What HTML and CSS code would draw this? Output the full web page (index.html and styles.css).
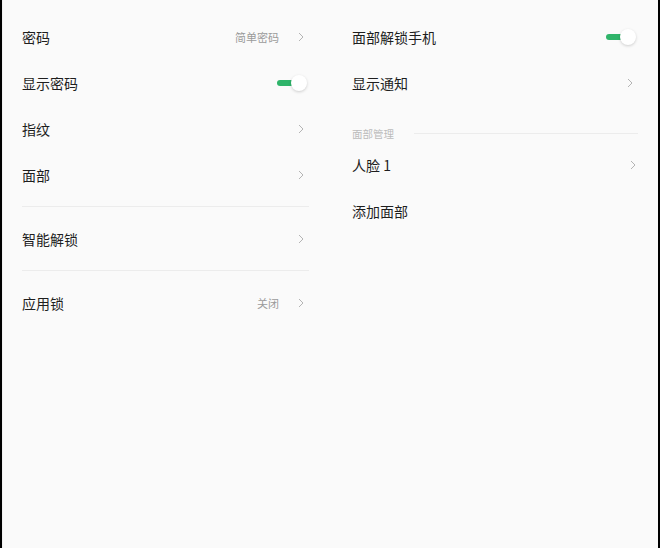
FILE: index.html
```html
<!DOCTYPE html>
<html lang="zh-CN">
<head>
    <meta charset="UTF-8">
    <meta name="viewport" content="width=device-width, initial-scale=1.0">
    <title>面部与密码</title>
    <link rel="stylesheet" href="styles.css">
</head>
<body>
    <div class="screen">
        <div class="pane">
            <div class="row">
                <span class="label">密码</span>
                <span class="value">简单密码</span>
                <svg class="chevron" viewBox="0 0 6 10"><polyline points="1,1 5,5 1,9"/></svg>
            </div>
            <div class="row">
                <span class="label">显示密码</span>
                <span class="switch on"><span class="knob"></span></span>
            </div>
            <div class="row">
                <span class="label">指纹</span>
                <svg class="chevron" viewBox="0 0 6 10"><polyline points="1,1 5,5 1,9"/></svg>
            </div>
            <div class="row">
                <span class="label">面部</span>
                <svg class="chevron" viewBox="0 0 6 10"><polyline points="1,1 5,5 1,9"/></svg>
            </div>
            <div class="divider"></div>
            <div class="row">
                <span class="label">智能解锁</span>
                <svg class="chevron" viewBox="0 0 6 10"><polyline points="1,1 5,5 1,9"/></svg>
            </div>
            <div class="divider"></div>
            <div class="row">
                <span class="label">应用锁</span>
                <span class="value">关闭</span>
                <svg class="chevron" viewBox="0 0 6 10"><polyline points="1,1 5,5 1,9"/></svg>
            </div>
        </div>

        <div class="pane pane--right">
            <div class="row">
                <span class="label">面部解锁手机</span>
                <span class="switch on"><span class="knob"></span></span>
            </div>
            <div class="row">
                <span class="label">显示通知</span>
                <svg class="chevron" viewBox="0 0 6 10"><polyline points="1,1 5,5 1,9"/></svg>
            </div>
            <div class="section-title">
                <span>面部管理</span>
                <span class="section-line"></span>
            </div>
            <div class="row">
                <span class="label">人脸 1</span>
                <svg class="chevron chevron--far" viewBox="0 0 6 10"><polyline points="1,1 5,5 1,9"/></svg>
            </div>
            <div class="row">
                <span class="label">添加面部</span>
            </div>
        </div>
    </div>
</body>
</html>
```

FILE: styles.css
```css
body {
    margin: 0;
    height: 100vh;
    background: #000;
    font-family: "Noto Sans CJK SC", "Noto Sans", sans-serif;
}

.screen {
    height: 100vh;
    margin: 0 2px;
    background: #fafafa;
    border-left: 1px solid #f0f0f0;
    box-sizing: border-box;
    display: grid;
    grid-template-columns: 327px 1fr;
}

/*
 * panes
 */
.pane {
    padding: 14px 21px 0 19px;
}
.pane--right {
    padding-left: 22px;
    padding-right: 20px;
}

.row {
    height: 46px;
    display: flex;
    align-items: center;
}

.label {
    flex: 1;
    font-size: 14px;
    color: #1e1e1e;
}

.value {
    font-size: 11px;
    color: #9a9a9a;
    margin-right: 19px;
}

.chevron {
    width: 6px;
    height: 10px;
    margin-right: 5px;
    fill: none;
    stroke: #b4b4b4;
    stroke-width: 1;
}
.chevron--far {
    margin-right: 2px;
}

.divider {
    height: 1px;
    background: #ececec;
    margin: 8px 0 9px;
}

/*
 * switch
 */
.switch {
    position: relative;
    width: 30px;
    height: 16px;
    margin-right: 2px;
    display: flex;
    align-items: center;
}
.switch::before {
    content: "";
    width: 18px;
    height: 6px;
    border-radius: 3px;
    background: #d0d0d0;
}
.switch.on::before {
    background: #2fb46a;
}
.switch .knob {
    position: absolute;
    right: 0;
    top: 0;
    width: 16px;
    height: 16px;
    border-radius: 50%;
    background: #fff;
    box-shadow: 0 1px 3px rgba(0,0,0,0.18);
}

/*
 * section title
 */
.section-title {
    height: 36px;
    display: flex;
    align-items: flex-end;
    padding-bottom: 1px;
    box-sizing: border-box;
    font-size: 10.5px;
    color: #bcbcbc;
}
.section-title span:first-child {
    line-height: 14px;
}
.section-line {
    flex: 1;
    height: 1px;
    background: #ececec;
    margin: 0 0 7px 20px;
}
```
